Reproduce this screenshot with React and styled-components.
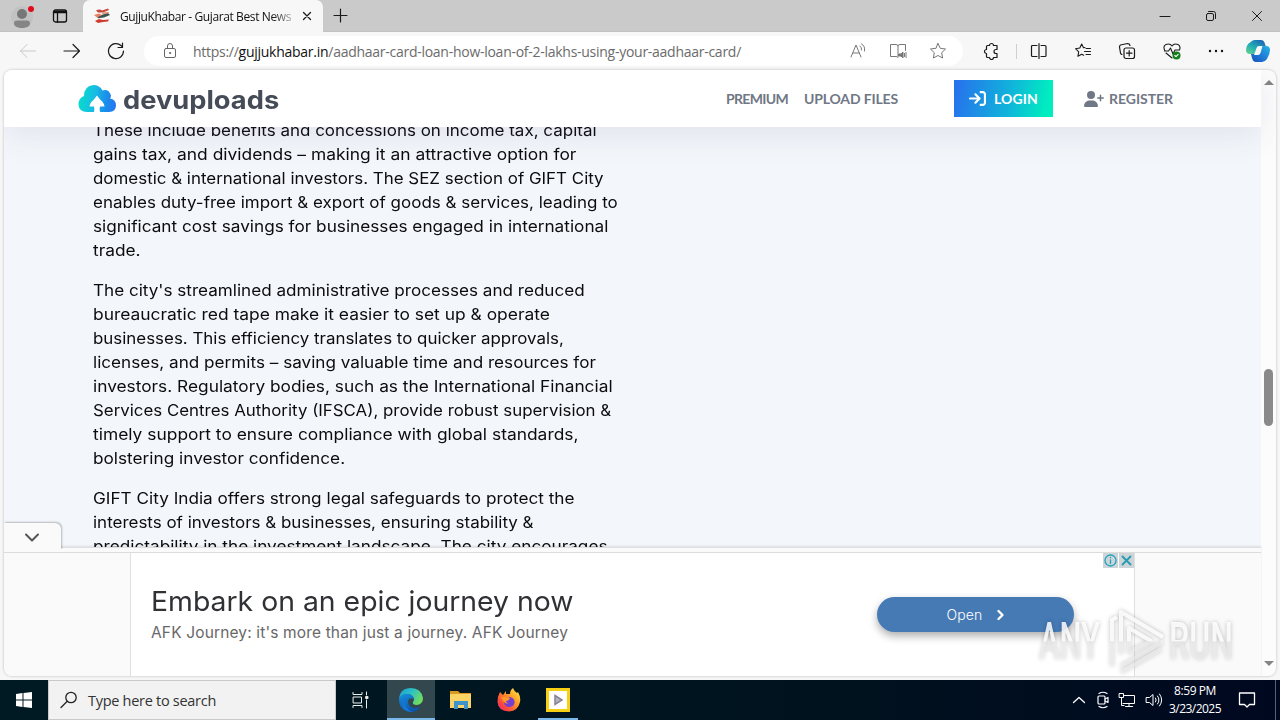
import React, { useLayoutEffect, useRef } from 'react'
import styled, { createGlobalStyle } from 'styled-components'
import { FaArrowRightToBracket, FaUserPlus } from 'react-icons/fa6'

const paragraphs = [
    [
        ['These include benefits and concessions on income tax, capital', 504],
        ['gains tax, and dividends – making it an attractive option for', 483],
        ['domestic & international investors. The SEZ section of GIFT City', 511],
        ['enables duty-free import & export of goods & services, leading to', 525],
        ['significant cost savings for businesses engaged in international', 515],
        ['trade.', 48],
    ],
    [
        ["The city's streamlined administrative processes and reduced", 492],
        ['bureaucratic red tape make it easier to set up & operate', 457],
        ['businesses. This efficiency translates to quicker approvals,', 471],
        ['licenses, and permits – saving valuable time and resources for', 503],
        ['investors. Regulatory bodies, such as the International Financial', 520],
        ['Services Centres Authority (IFSCA), provide robust supervision &', 518],
        ['timely support to ensure compliance with global standards,', 486],
        ['bolstering investor confidence.', 252],
    ],
    [
        ['GIFT City India offers strong legal safeguards to protect the', 481],
        ['interests of investors & businesses, ensuring stability &', 441],
        ['predictability in the investment landscape. The city encourages', 514],
    ],
]

// makes the text take exactly `width` pixels, by its letter spacing
// or (stretch) by widening the letters themselves
function Fit({ width, stretch, children }) {
    const ref = useRef(null)

    useLayoutEffect(() => {
        const el = ref.current
        el.style.letterSpacing = ''
        el.style.transform = ''
        const natural = el.offsetWidth
        if (stretch) {
            el.style.transform = `scaleX(${width / natural})`
        } else {
            const exact = el.getBoundingClientRect().width
            el.style.letterSpacing = `${(width - exact) / el.textContent.length}px`
        }
    }, [width, stretch])

    return <FitText ref={ref}>{children}</FitText>
}

function Icon({ w = 18, h, sw = 1, color = '#1b1b1b', children }) {
    return (
        <IconSvg width={w} height={h || w} viewBox={`0 0 ${w} ${h || w}`} fill="none" stroke={color} strokeWidth={sw} strokeLinecap="round" strokeLinejoin="round">
            {children}
        </IconSvg>
    )
}

function TabStrip() {
    return (
        <Strip>
            <StripLeft>
                <Icon w={26} h={28} color="none">
                    <circle cx="12" cy="15" r="11" fill="#c2c2c2" />
                    <circle cx="12" cy="12" r="5" fill="#777" />
                    <path d="M4 21.500q0-3 3-3h10q3 0 3 3c0 3-4 4.500-8 4.500s-8-1.500-8-4.500z" fill="#858585" />
                    <circle cx="21" cy="7" r="3" fill="#e00b1c" />
                </Icon>
                <Icon w={16} sw={1.300} color="#111">
                    <rect x="1.500" y="2" width="13" height="12" rx="2" />
                    <path d="M2 3.500h12M2 4.500h12M5.500 4v10" />
                </Icon>
            </StripLeft>
            <Tab>
                <Icon w={18} color="none">
                    <path d="M3 3.500q4-2 6 0l6-2 1 1.500-6 2.500-5 0z" fill="#c4493a" />
                    <path d="M4 9.500l6-2 5-1.500 2 2-6 2.500-6 .8z" fill="#3a5550" />
                    <path d="M1 8l5-1.500 3 1.500-5 2.500zM10 5.500l6-.5-1 1.500-6 .5z" fill="#e78062" />
                    <path d="M2 14l4-2 4 1 6-.5-1 2-5 .5-5 1z" fill="#cf3c2e" />
                </Icon>
                <TabTitle><Fit width={171}>GujjuKhabar - Gujarat Best News</Fit></TabTitle>
                <Icon w={10} sw={1.300}><path d="M1.500 1.500l7 7M8.500 1.500l-7 7" /></Icon>
            </Tab>
            <NewTab><Icon w={15} sw={1.200}><path d="M7.500 1v13M1 7.500h13" /></Icon></NewTab>
            <WindowButtons>
                <Icon w={12}><path d="M1 6.500h10" /></Icon>
                <Icon w={12}><rect x="1.500" y="3.500" width="7" height="7" rx="1.500" /><path d="M3.500 1.500h5q2 0 2 2v5" /></Icon>
                <Icon w={12}><path d="M1.500 1.500l9 9M10.500 1.500l-9 9" /></Icon>
            </WindowButtons>
        </Strip>
    )
}

function Toolbar() {
    return (
        <Bar>
            <NavButtons>
                <Icon color="#c9c9c9"><path d="M1.500 9h15M8 2.500L1.500 9 8 15.500" /></Icon>
                <Icon sw={1.200}><path d="M1 9h15.500M10 2.500L16.500 9 10 15.500" /></Icon>
                <Icon sw={1.200}><path d="M16.500 9A7.500 7.500 0 1 1 14 3.500L15.500 5M15.500 1v4.500H11" /></Icon>
            </NavButtons>
            <Address>
                <Icon w={14} h={18} color="#666"><rect x="1.500" y="6.500" width="11" height="9" rx="1.500" /><path d="M4.500 6V4q0-2.500 2.500-2.500T9.500 4v2" /><circle cx="7" cy="11" r=".6" fill="#666" /></Icon>
                <Url><Fit width={548}>https://<b>gujjukhabar.in</b>/aadhaar-card-loan-how-loan-of-2-lakhs-using-your-aadhaar-card/</Fit></Url>
                <AddressIcons>
                    <Icon color="#777"><path d="M2 15L7 3l5 12M4 11h6M11 4q2 1.500 1.500 4M12.500 2q4 2 3 7" /></Icon>
                    <Icon color="#777"><path d="M9 3.500v11M9 3.500q-1-1-2-1H1.500v12H7q1.500 0 2 1M9 3.500q1-1 2-1h5.500v6" /><path d="M10 12h2l2-2v6l-2-2h-2z" fill="#777" /><path d="M15.500 11.500v3M17 10.500v5" /></Icon>
                    <Icon color="#777"><path d="M9 1.500l2.300 4.800 5.200.7-3.800 3.700.9 5.300L9 13.500 4.400 16l.9-5.300L1.500 7l5.200-.7z" /></Icon>
                </AddressIcons>
            </Address>
            <Tools>
                <Icon sw={1.200}><path d="M5.500 3.500h2a2 2 0 0 1 4 0h3.500v4h-1a1.800 1.800 0 0 0 0 4h1v4h-3.500a2 2 0 0 1-4 0h-2q-1 0-1-1v-3a2 2 0 1 1 0-4v-3q0-1 1-1z" /></Icon>
                <Separator />
                <Icon w={18} sw={1.200}><path d="M7 3.500H2.500q-1 0-1 1v9q0 1 1 1H7M11 3.500h4q1 0 1 1v9q0 1-1 1h-4M9 1.500v15" /></Icon>
                <Icon sw={1.100}><path d="M11 5.500L9.500 5.700 7.700 2 5.800 6 1.500 6.700l3.200 3.100-.8 4.500 3.800-2 2 1M12 6.500h4.500M10.500 9.500h6M12 12.500h4.500" /></Icon>
                <Icon sw={1.200}><rect x="6" y="6" width="10.500" height="10.500" rx="2" /><path d="M4 12.500q-1 0-1.500-1.500L1.500 5q0-1.500 1-2l7-1.500q2 0 2.500 2M11.200 8.500v5.500M8.500 11.200H14" /></Icon>
                <Icon sw={1.100}><path d="M2 9Q-.5 4 3 2.500 7 1 9 4q2-3 6-1.500 3 1.500 1.500 5.500M1.500 9h4l2-3 2.500 6 2-4h4M3 11l6 5" /><circle cx="13.500" cy="13.500" r="4" fill="#13801b" stroke="none" /><path d="M11.800 13.500l1.200 1.200 2.200-2.400" stroke="#fff" /></Icon>
                <Icon><g fill="#111" stroke="none"><circle cx="3" cy="9" r="1.200" /><circle cx="9" cy="9" r="1.200" /><circle cx="15" cy="9" r="1.200" /></g></Icon>
            </Tools>
            <svg width="26" height="26" viewBox="0 0 26 26">
                <defs>
                    <linearGradient id="cpA" x1="0" y1="1" x2=".8" y2="0"><stop offset="0" stopColor="#67d68c" /><stop offset=".5" stopColor="#22acb4" /><stop offset="1" stopColor="#1d64b6" /></linearGradient>
                    <linearGradient id="cpB" x1="1" y1="0" x2="0" y2="1"><stop offset="0" stopColor="#25b4e5" /><stop offset=".5" stopColor="#207ed8" /><stop offset="1" stopColor="#164eb8" /></linearGradient>
                </defs>
                <path d="M7 3q1-1 3-1h6q3 0 4 4l1 3h-4q-3 0-4 3l-1 4H5q-4 0-4-4 0-3 2-6z" fill="url(#cpA)" />
                <path d="M17 8h4q4 0 4 4 0 4-3 9-2 3-5 3h-6q-3 0-4-4l-1-4h3q3 0 4-3z" fill="url(#cpB)" />
                <path d="M14 8h3.500l-2 7q-.7 2-2.500 2H9l2.500-7q.5-2 2.500-2z" fill="#f7f7f7" />
            </svg>
        </Bar>
    )
}

function SiteHeader() {
    return (
        <Header>
            <Logo>
                <svg width="39" height="30" viewBox="0 0 39 30">
                    <defs><linearGradient id="cloud" x1="0" y1=".6" x2="1" y2=".7"><stop offset="0" stopColor="#08dbcd" /><stop offset=".4" stopColor="#17bde2" /><stop offset=".75" stopColor="#198cec" /><stop offset="1" stopColor="#2875f3" /></linearGradient></defs>
                    <path d="M9 28Q1 28 .5 20.500.5 14 6 12 6 2 15.500 1q6 0 9 5.500 6-2 8.500 5 0 2-1 3 6 1 6 7 0 6-7 6.500H22q-.8-3 0-5.500h4.500q-.5-4-4-6.500L19 11.500 15.500 16q-3.500 2.500-4 6.500H16q.8 3 0 5.500z" fill="url(#cloud)" />
                </svg>
                <LogoText><Fit width={156} stretch>devuploads</Fit></LogoText>
            </Logo>
            <Menu>
                <MenuLink><Fit width={62}>PREMIUM</Fit></MenuLink>
                <MenuLink><Fit width={94}>UPLOAD FILES</Fit></MenuLink>
            </Menu>
            <Login><FaArrowRightToBracket size={17} /><Fit width={44}>LOGIN</Fit></Login>
            <Register><FaUserPlus size={20} /><Fit width={64}>REGISTER</Fit></Register>
        </Header>
    )
}

function AdPanel() {
    return (
        <Panel>
            <CollapseTab><Icon w={16} h={10} sw={2} color="#555"><path d="M2 1.500l6 6 6-6" /></Icon></CollapseTab>
            <Ad>
                <AdCopy>
                    <AdTitle><Fit width={423} stretch>Embark on an epic journey now</Fit></AdTitle>
                    <AdText><Fit width={417}>AFK Journey: it's more than just a journey. AFK Journey</Fit></AdText>
                </AdCopy>
                <OpenButton>
                    <Fit width={36}>Open</Fit>
                    <Icon w={9} h={12} sw={2.400} color="#fff"><path d="M2.500 2L6.500 6l-4 4" /></Icon>
                </OpenButton>
                <AdChoices>
                    <Icon w={15} sw={1.300} color="#20a0bd"><circle cx="7.500" cy="7.500" r="5.500" /><path d="M7.500 7v3.500M7.500 4.500v.2" /></Icon>
                    <Icon w={15} sw={1.800} color="#279ab4"><path d="M3.500 3.500l8 8M11.500 3.500l-8 8" /></Icon>
                </AdChoices>
            </Ad>
        </Panel>
    )
}

function Watermark() {
    return (
        <Mark width="210" height="76" viewBox="0 0 210 76">
            <defs>
                <linearGradient id="fade" x1="0" y1="0" x2="0" y2="76" gradientUnits="userSpaceOnUse"><stop offset=".48" stopColor="#fff" stopOpacity=".85" /><stop offset=".5" stopColor="#f0f0f0" stopOpacity=".6" /></linearGradient>
            </defs>
            <g fill="url(#fade)" fontFamily="Roboto, sans-serif" fontWeight="500" fontSize="52">
                <text x="8" y="55" textLength="61" lengthAdjust="spacingAndGlyphs">ANY</text>
                <text x="138" y="55" textLength="64" lengthAdjust="spacingAndGlyphs">RUN</text>
            </g>
            <g fill="none" stroke="url(#fade)" strokeWidth="4" strokeLinejoin="round">
                <path d="M81 62V16l5-3M90 50V8l42 25M132 38L90 62M90 68l40-23M98 48V24l22 13z" />
            </g>
        </Mark>
    )
}

function Taskbar() {
    return (
        <Task>
            <TaskItem>
                <svg width="16" height="16" viewBox="0 0 16 16"><path d="M0 2l6.500-1v6.500H0zM7.500.9L16 0v7.500H7.500zM0 8.500h6.500V15L0 14zM7.500 8.500H16V16l-8.500-.9z" fill="#fff" /></svg>
            </TaskItem>
            <Search>
                <Icon w={18} sw={1.300} color="#222"><circle cx="11" cy="6.500" r="5.200" /><path d="M7 10.500L1 16.500" /></Icon>
                <Fit width={128}>Type here to search</Fit>
            </Search>
            <TaskItem $wide>
                <Icon w={18} color="#eee"><path d="M2 1.500v2h9v-2M2 16.500v-2h9v2M2.500 6h8v6h-8zM15.500 1v3M15.500 9v8" /><rect x="15" y="5.500" width="2" height="2" fill="#eee" /></Icon>
            </TaskItem>
            <TaskItem $active $open>
                <svg width="26" height="26" viewBox="0 0 26 26">
                    <defs>
                        <linearGradient id="edA" x1="0" y1="0" x2="1" y2=".5"><stop offset="0" stopColor="#209bd2" /><stop offset=".5" stopColor="#2ac0c6" /><stop offset="1" stopColor="#6ddb62" /></linearGradient>
                        <linearGradient id="edB" x1="0" y1="0" x2=".4" y2="1"><stop offset="0" stopColor="#1591de" /><stop offset="1" stopColor="#0b55ac" /></linearGradient>
                    </defs>
                    <path d="M1 12Q2 1 13 1q10 0 12 10 0 6-6 7-5 0-4-3 1-1 1-3-1-4-6-5-6 0-9 5z" fill="url(#edA)" />
                    <path d="M1 12q2-5 8-5 6 0 7 5-5-2-6 2 0 6 6 7 5 0 7-2-4 6-10 6Q1 24 1 12z" fill="url(#edB)" />
                    <path d="M9 11q-4 6 1 11 2 2 5 2.500Q7 26 4 19q-1-6 5-8z" fill="#1675ce" />
                </svg>
            </TaskItem>
            <TaskItem $gap>
                <svg width="24" height="22" viewBox="0 0 24 22"><path d="M1 2h8l2 2h11v4H1z" fill="#d99a20" /><path d="M1 5h21v14H1z" fill="#fcd365" /><path d="M5 12h14v8h-4v-4H9v4H5z" fill="#3d95cc" /></svg>
            </TaskItem>
            <TaskItem>
                <svg width="26" height="26" viewBox="0 0 26 26">
                    <defs><linearGradient id="fox" x1="1" y1="0" x2="0" y2="1"><stop offset="0" stopColor="#fff34b" /><stop offset=".4" stopColor="#ff9a25" /><stop offset=".75" stopColor="#fb4540" /><stop offset="1" stopColor="#e52284" /></linearGradient></defs>
                    <path d="M4 5l3 3 3-4v3l4 0q0-4 3-6 1 3 4 5l1-1q3 5 2 10-2 9-11 9.500Q2 24 1.500 15 1.500 9 4 5z" fill="url(#fox)" />
                    <path d="M8 11q3 1 6-1 5 1 4.500 6-1 4-5.500 4-5 0-5-6z" fill="#7540d0" />
                    <path d="M5 10q4-1 6 1l3 0q-1 3-4 3 0 2 3 2-5 2-8-6z" fill="#ff9825" />
                </svg>
            </TaskItem>
            <TaskItem $open $inset>
                <svg width="24" height="24" viewBox="0 0 24 24"><path d="M0 0h24v24H0z" fill="#f7cf13" /><path d="M3 3h18v18H3z" fill="#fff" /><path d="M9 7.500l7 4.500-7 4.500z" fill="#b4b1c1" stroke="#858391" strokeWidth="1.500" /></svg>
            </TaskItem>
            <Tray>
                <Icon w={14} h={8} sw={1.300} color="#fff"><path d="M1.500 6.500L7 1.500l5.500 5" /></Icon>
                <Icon w={14} h={18} sw={1.200} color="#fff"><rect x="3" y="5" width="7" height="8" rx="1" /><path d="M10 8l3-1.500v5L10 10M4 2.500q4-2.500 8 0M4 15.500q4 2.500 8 0" /></Icon>
                <Icon w={18} color="#fff"><path d="M6.500 4.500h10v8H5M11 13v2.500M7.500 15.500h7M1.500 2.500h4v4h-4zM3.500 7v7.500H6" /></Icon>
                <Icon w={18} color="#fff"><path d="M1.500 6.500h3l3.500-3v11l-3.500-3h-3zM10.500 7q1.500 2 0 4M12.500 5q3 4 0 8M14.500 3q4.500 6 0 12" /></Icon>
            </Tray>
            <Clock>
                <Fit width={42}>8:59 PM</Fit>
                <Fit width={52}>3/23/2025</Fit>
            </Clock>
            <Notify><Icon w={18} sw={1.300} color="#fff"><path d="M1.500 2h15v11.500h-5l-2.500 2.500-2.500-2.500h-5z" /></Icon></Notify>
        </Task>
    )
}

export default function App() {
    return (
        <Screen>
            <GlobalStyle />
            <TabStrip />
            <Toolbar />
            <Frame>
                <Page>
                    <SiteHeader />
                    <Article>
                        {paragraphs.map((lines, i) => (
                            <Paragraph key={i}>
                                {lines.map(([text, width]) => (
                                    <Line key={text}><Fit width={width} stretch>{text}</Fit></Line>
                                ))}
                            </Paragraph>
                        ))}
                    </Article>
                    <AdPanel />
                </Page>
                <Scrollbar>
                    <Arrow />
                    <Thumb />
                    <Arrow $down />
                </Scrollbar>
            </Frame>
            <Taskbar />
            <Watermark />
        </Screen>
    )
}

const GlobalStyle = createGlobalStyle`
    body{
        margin: 0;
        overflow: hidden;
    }

    *{
        box-sizing: border-box;
    }
`

const FitText = styled.span`
    display: inline-block;
    white-space: pre;
    flex: none;
    transform-origin: left;
`

const IconSvg = styled.svg`
    display: block;
    flex: none;
`

const Screen = styled.div`
    position: relative;
    width: 1280px;
    height: 720px;
    display: flex;
    flex-direction: column;
    background: #f7f7f7;
    overflow: hidden;
    font-family: "Open Sans", "Noto Sans", sans-serif;
`

const Strip = styled.div`
    height: 32px;
    display: flex;
    background: #cacaca;
    border-bottom: 1px solid #c2c2c2;
`

const StripLeft = styled.div`
    width: 83px;
    padding-left: 10px;
    display: flex;
    align-items: center;
    gap: 16px;
`

const Tab = styled.div`
    width: 240px;
    height: 32px;
    padding: 0 11px 0 10px;
    display: flex;
    align-items: center;
    background: #f7f7f7;
    border-radius: 7px 7px 0 0;
`

const TabTitle = styled.div`
    width: 173px;
    margin: 0 10px 0 9px;
    font-size: 12px;
    color: #111;
    overflow: hidden;
    white-space: nowrap;
    mask-image: linear-gradient(90deg, #000 88%, rgba(0, 0, 0, .3) 100%);
`

const NewTab = styled.div`
    padding-left: 10px;
    display: flex;
    align-items: center;
`

const WindowButtons = styled.div`
    margin-left: auto;
    padding-right: 17px;
    display: flex;
    align-items: center;
    gap: 34px;
`

const Bar = styled.div`
    height: 38px;
    padding-right: 9px;
    display: flex;
    align-items: center;
`

const NavButtons = styled.div`
    width: 144px;
    padding-left: 19px;
    display: flex;
    gap: 26px;
`

const Address = styled.div`
    width: 819px;
    height: 30px;
    padding: 0 16px 0 19px;
    display: flex;
    align-items: center;
    background: #fff;
    border-radius: 15px;
`

const Url = styled.div`
    margin-left: 16px;
    font-size: 14px;
    color: #6b6b6b;

    b{
        font-weight: 400;
        color: #111;
    }
`

const AddressIcons = styled.div`
    margin-left: auto;
    display: flex;
    gap: 22px;
`

const Tools = styled.div`
    flex: 1;
    padding: 0 20px 0 19px;
    display: flex;
    align-items: center;
    justify-content: space-between;
`

const Separator = styled.div`
    width: 1px;
    height: 15px;
    margin: 0 -14px 0 -10px;
    background: #cfcfcf;
`

const Frame = styled.div`
    height: 606px;
    margin: 0 4px 4px;
    display: flex;
    flex: none;
    background: #fcfcfc;
    border-radius: 8px;
    overflow: hidden;
    box-shadow: 0 0 2px 1px #d9d9d9;
`

const Page = styled.div`
    width: 1257px;
    display: flex;
    flex-direction: column;
`

const Header = styled.header`
    position: relative;
    z-index: 1;
    flex: none;
    height: 57px;
    padding-left: 74px;
    display: flex;
    align-items: center;
    background: #fff;
    box-shadow: 0 8px 32px rgba(70, 70, 130, .1);
    font-family: Lato, sans-serif;
    font-size: 14px;
    font-weight: 700;
    color: #707785;
`

const Logo = styled.div`
    width: 648px;
    display: flex;
    align-items: center;
    gap: 6px;
`

const LogoText = styled.div`
    padding-top: 3px;
    font-family: Inter, sans-serif;
    font-size: 25px;
    line-height: 30px;
    color: #454c58;
`

const Menu = styled.nav`
    width: 228px;
    display: flex;
    gap: 16px;
`

const MenuLink = styled.div`
    line-height: 20px;
`

const Login = styled.div`
    width: 99px;
    height: 37px;
    padding-left: 15px;
    display: flex;
    align-items: center;
    gap: 8px;
    color: #fff;
    background: linear-gradient(100deg, #2674ec 4%, #10b3db 55%, #00edc0 92%);
`

const Register = styled.div`
    margin-left: 31px;
    display: flex;
    align-items: center;
    gap: 5px;
`

const Article = styled.main`
    height: 420px;
    flex: none;
    padding-left: 89px;
    background: #f3f6fa;
    overflow: hidden;
    font-family: Inter, sans-serif;
    font-size: 15.5px;
    color: #0c0c0e;
`

const Paragraph = styled.p`
    margin: 0 0 16px;

    &:first-child{
        margin-top: -8px;
    }
`

const Line = styled.span`
    display: block;
    height: 24px;
    line-height: 24px;
`

const Panel = styled.section`
    position: relative;
    z-index: 2;
    height: 129px;
    flex: none;
    padding-top: 4px;
    background: #fafafa;
    border-top: 1px solid #dedfe1;
    box-shadow: 0 -1px 2px rgba(0, 0, 0, .1);
`

const CollapseTab = styled.div`
    position: absolute;
    left: 0;
    top: -25px;
    width: 57px;
    height: 27px;
    padding: 10px 0 0 20px;
    background: #fafafa;
    border-radius: 0 6px 0 0;
    box-shadow: 1px -1px 2px rgba(0, 0, 0, .25);
    clip-path: inset(-3px -4px 1px 0);
`

const Ad = styled.div`
    position: relative;
    height: 124px;
    display: flex;
    border-top: 1px solid #dcdcdc;

    &::before{
        content: '';
        width: 126px;
        flex: none;
    }
`

const AdCopy = styled.div`
    width: 1005px;
    padding: 28px 0 0 20px;
    background: #fff;
    border: solid #e0e0e0;
    border-width: 0 1px;
    font-family: Inter, sans-serif;
`

const AdTitle = styled.div`
    height: 41px;
    line-height: 41px;
    font-size: 27.5px;
    color: #303134;
`

const AdText = styled.div`
    height: 22px;
    line-height: 22px;
    font-size: 15.5px;
    color: #686868;
`

const OpenButton = styled.div`
    position: absolute;
    left: 873px;
    top: 44px;
    width: 197px;
    height: 35px;
    display: flex;
    align-items: center;
    justify-content: center;
    gap: 13px;
    background: #467ab5;
    border-radius: 18px;
    box-shadow: 0 4px 8px rgba(0, 0, 0, .32);
    color: #fff;
    font-family: Inter, sans-serif;
    font-size: 14px;
    font-weight: 300;
`

const AdChoices = styled.div`
    position: absolute;
    left: 1099px;
    top: 0;
    display: flex;
    gap: 1px;

    svg{
        background: #cdd5d8;
    }
`

const Scrollbar = styled.div`
    width: 15px;
    padding: 10px 0 10px;
    display: flex;
    flex-direction: column;
    align-items: center;
    justify-content: space-between;
`

const Arrow = styled.div`
    border: 5px solid transparent;
    border-top-width: ${props => props.$down ? '5px' : '0'};
    border-bottom-width: ${props => props.$down ? '0' : '5px'};
    border-${props => props.$down ? 'top' : 'bottom'}-color: #858585;
`

const Thumb = styled.div`
    width: 9px;
    height: 57px;
    margin-top: 49px;
    background: #8a8a8a;
    border-radius: 5px;
`

const Mark = styled.svg`
    position: absolute;
    z-index: 3;
    left: 1031px;
    top: 604px;
    filter: drop-shadow(0 0 2px rgba(0, 0, 0, .3));
`

const Task = styled.div`
    height: 40px;
    flex: none;
    display: flex;
    background: linear-gradient(90deg, #001a23, #00131e 60%, #000820);
`

const TaskItem = styled.div`
    width: ${props => props.$wide ? '51px' : props.$inset ? '50px' : '48px'};
    margin-left: ${props => props.$gap ? '1.5px' : '0'};
    padding-right: ${props => props.$wide ? '4px' : '0'};
    display: flex;
    align-items: center;
    justify-content: center;
    background: ${props => props.$active ? '#33474f' : 'none'};
    background-image: ${props => props.$open ? 'linear-gradient(#79b8e8, #79b8e8)' : 'none'};
    background-size: ${props => props.$inset ? '40px 2px' : '100% 2px'};
    background-position: center bottom;
    background-repeat: no-repeat;
`

const Search = styled.div`
    width: 288px;
    padding-left: 11px;
    display: flex;
    align-items: center;
    gap: 10px;
    background: #f2f2f2;
    border: 1px solid #c7c9ca;
    font-size: 14.5px;
    color: #333;
`

const Tray = styled.div`
    margin-left: auto;
    width: 97px;
    display: flex;
    align-items: center;
    gap: 9px;
`

const Clock = styled.div`
    width: 52px;
    display: flex;
    flex-direction: column;
    align-items: center;
    justify-content: center;
    font-size: 12px;
    line-height: 18px;
    color: #fff;
`

const Notify = styled.div`
    width: 55px;
    margin-right: 4px;
    padding-left: 17px;
    display: flex;
    align-items: center;
    border-right: 1px solid #59616e;
`
